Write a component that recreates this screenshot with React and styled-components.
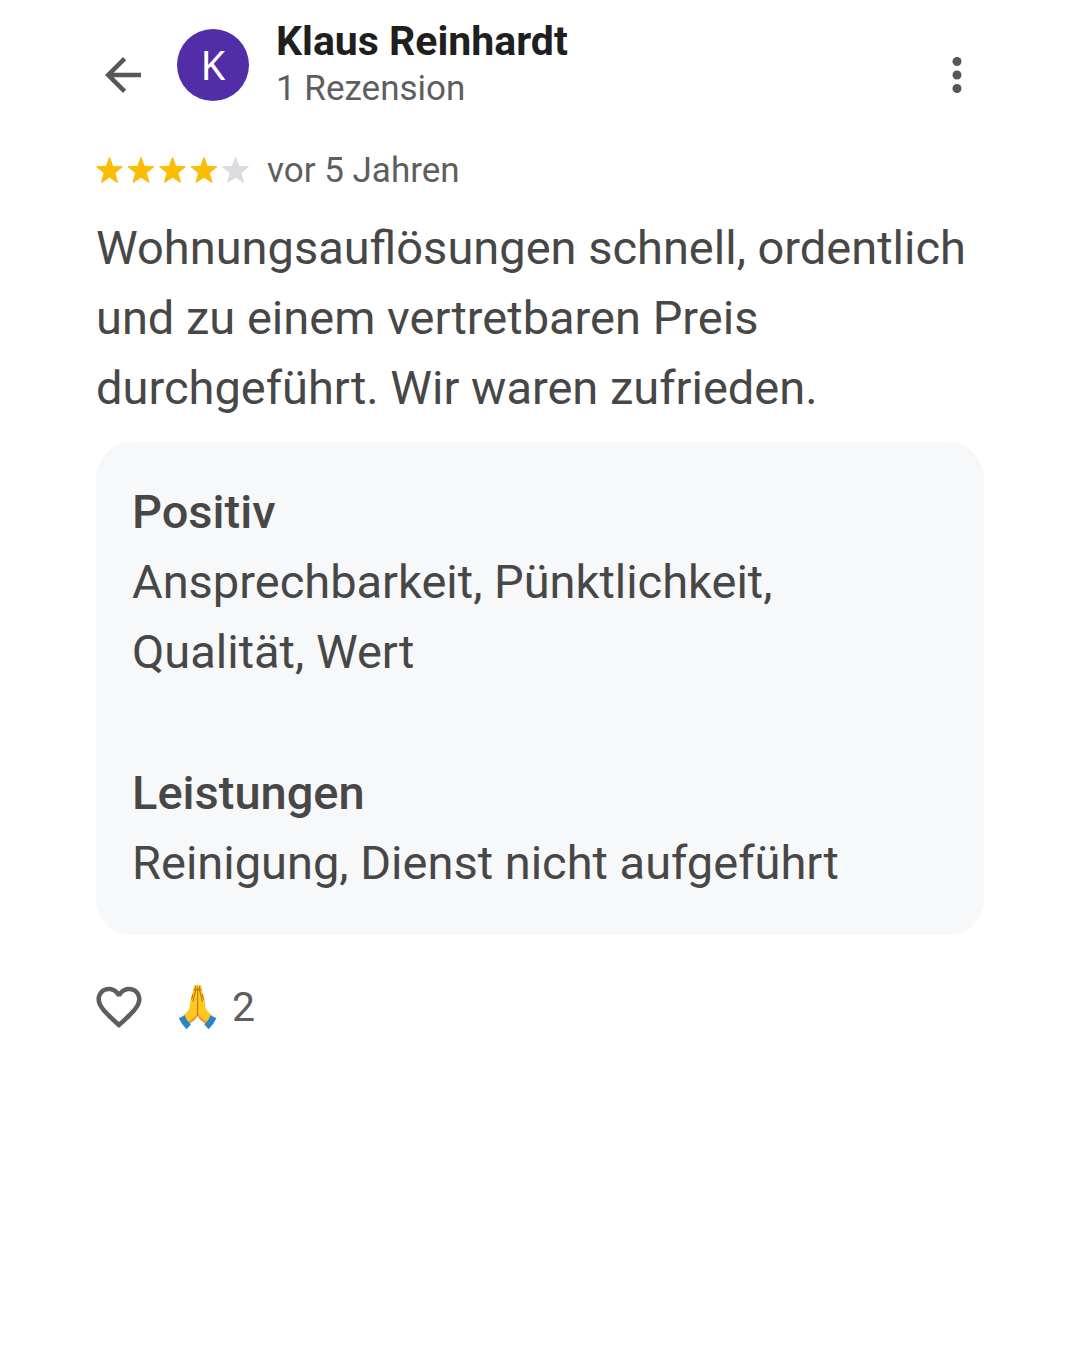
import React from "react";
import styled, { createGlobalStyle, ThemeProvider } from "styled-components";

const theme = {
  title: "#1f1f1f",
  text: "#474747",
  subtle: "#5e5e5e",
  icon: "#575757",
  card: "#f7f8fa",
  avatar: "#512da8",
  star: "#fbbc04",
  starEmpty: "#dadce0"
};

const review = {
  author: "Klaus Reinhardt",
  count: "1 Rezension",
  rating: 4,
  date: "vor 5 Jahren",
  text: "Wohnungsauflösungen schnell, ordentlich und zu einem vertretbaren Preis durchgeführt. Wir waren zufrieden.",
  details: [
    { title: "Positiv", value: "Ansprechbarkeit, Pünktlichkeit, Qualität, Wert" },
    { title: "Leistungen", value: "Reinigung, Dienst nicht aufgeführt" }
  ],
  reactions: 2
};

function Stars({ rating }) {
  return (
    <svg width="154" height="28" viewBox="0 0.6 154 28" role="img" aria-label={`${rating} von 5 Sternen`}>
      {[0, 1, 2, 3, 4].map((i) => (
        <path
          key={i}
          transform={`translate(${i * 31.5} 0)`}
          fill={i < rating ? theme.star : theme.starEmpty}
          stroke={i < rating ? theme.star : theme.starEmpty}
          strokeWidth="1"
          strokeLinejoin="round"
          d="M13.5 1 16.8 10 26.4 10.4 18.9 16.4 21.5 26.1 13.5 20.8 5.5 26.1 8.1 16.4 .6 10.4 10.2 10Z"
        />
      ))}
    </svg>
  );
}

function FoldedHands() {
  return (
    <svg width="40" height="46" viewBox="0 0 40 46" role="img" aria-label="Gefaltete Hände">
      <path fill="#ffc722" d="M15.8 2.2Q16.4 .7 18 1Q19.5 .4 21 1Q22.9 .6 23.3 2.2L24.2 7.5Q27.1 15.5 27.5 23.5Q29.2 28.2 34.3 31.4L28.3 40Q22.5 37.3 19.6 32.3Q16.7 37.3 10.9 40L4.9 31.4Q10 28.2 11.7 23.5Q12.1 15.5 15 7.5Z" />
      <path fill="#f19534" d="M19.6 31.5Q17.5 36.5 11.1 39.3L10 37.7Q15.5 35.6 19.1 29.8L19.6 24.5 20.1 29.8Q23.7 35.6 29.2 37.7L28.1 39.3Q21.7 36.5 19.6 31.5Z" />
      <path fill="none" stroke="#c1780f" strokeWidth="1.1" strokeLinecap="round" d="M19.6 3V31M17.5 2.5Q18.2 6 16.8 9.5L15 17.5M21.7 2.5Q21 6 22.4 9.5L24.2 17.5M15.8 6Q17.5 4.6 19.2 6M20 6Q21.7 4.6 23.4 6M14.8 10.5L13.7 15M24.4 10.5L25.5 15" />
      <path fill="#2686c9" d="M7 31.2Q8 36.2 13 40.2L8.6 45.2Q3.4 40.4 .8 34.2Z" />
      <path fill="#2686c9" d="M32.2 31.2Q31.2 36.2 26.2 40.2L30.6 45.2Q35.8 40.4 38.4 34.2Z" />
    </svg>
  );
}

function App() {
  return (
    <ThemeProvider theme={theme}>
      <GlobalStyle />
      <Page>
        <Header>
          <IconButton type="button" aria-label="Zurück">
            <svg width="54" height="54" viewBox="0 0 24 24" fill="currentColor">
              <path d="M20 11H7.83l5.59-5.59L12 4l-8 8 8 8 1.41-1.41L7.83 13H20v-2z" />
            </svg>
          </IconButton>
          <Avatar>K</Avatar>
          <Author>
            <Name>{review.author}</Name>
            <Meta>{review.count}</Meta>
          </Author>
          <IconButton type="button" aria-label="Mehr">
            <svg width="54" height="54" viewBox="0 0 24 24" fill="currentColor">
              <circle cx="12" cy="6" r="2" />
              <circle cx="12" cy="12" r="2" />
              <circle cx="12" cy="18" r="2" />
            </svg>
          </IconButton>
        </Header>

        <Rating>
          <Stars rating={review.rating} />
          <Meta>{review.date}</Meta>
        </Rating>

        <ReviewText>{review.text}</ReviewText>

        <Card>
          {review.details.map((detail) => (
            <div key={detail.title}>
              <DetailTitle>{detail.title}</DetailTitle>
              <DetailText>{detail.value}</DetailText>
            </div>
          ))}
        </Card>

        <Footer>
          <LikeButton type="button" aria-label="Gefällt mir">
            <svg width="46" height="46" viewBox="1.8 1.8 20.4 20.4" fill="currentColor">
              <path d="M16.5 3c-1.74 0-3.41.81-4.5 2.09C10.91 3.81 9.24 3 7.5 3 4.42 3 2 5.42 2 8.5c0 3.78 3.4 6.86 8.55 11.54L12 21.35l1.45-1.32C18.6 15.36 22 12.28 22 8.5 22 5.42 19.58 3 16.5 3zm-4.4 15.55l-.1.1-.1-.1C7.14 14.24 4 11.39 4 8.5 4 6.5 5.5 5 7.5 5c1.54 0 3.04.99 3.57 2.36h1.87C13.46 5.99 14.96 5 16.5 5c2 0 3.5 1.5 3.5 3.5 0 2.89-3.14 5.74-7.9 10.05z" />
            </svg>
          </LikeButton>
          <Reaction type="button">
            <FoldedHands />
            {review.reactions}
          </Reaction>
        </Footer>
      </Page>
    </ThemeProvider>
  );
}

export default App;

const GlobalStyle = createGlobalStyle`
  * {
    box-sizing: border-box;
  }

  body {
    margin: 0;
    background: #fff;
    font-family: Roboto, "Liberation Sans", sans-serif;
  }

  svg {
    display: block;
    flex-shrink: 0;
  }
`;

const Page = styled.main`
  padding: 18px 96px;
  color: ${(props) => props.theme.text};
`;

const Header = styled.header`
  display: flex;
  align-items: center;
`;

const IconButton = styled.button`
  margin: 20px 0 0;
  padding: 0;
  border: none;
  background: none;
  color: ${(props) => props.theme.icon};
  cursor: pointer;
`;

const LikeButton = styled(IconButton)`
  margin: 0;
  color: ${(props) => props.theme.subtle};
`;

const Avatar = styled.div`
  display: flex;
  align-items: center;
  justify-content: center;
  width: 72px;
  height: 72px;
  margin: 0 27px;
  border-radius: 50%;
  background: ${(props) => props.theme.avatar};
  color: #fff;
  font-family: "Noto Sans", Roboto, sans-serif;
  font-size: 40px;
  line-height: 48px;
`;

const Author = styled.div`
  display: grid;
  flex: 1;
  gap: 2px;
`;

const Name = styled.h1`
  margin: 0;
  color: ${(props) => props.theme.title};
  font-size: 41px;
  font-weight: 700;
  line-height: 46px;
`;

const Meta = styled.div`
  color: ${(props) => props.theme.subtle};
  font-size: 35px;
  line-height: 46px;
`;

const Rating = styled.div`
  display: flex;
  align-items: center;
  gap: 17px;
  margin: 36px 0 19px;
`;

const ReviewText = styled.p`
  margin: 0;
  font-size: 47px;
  line-height: 70px;
`;

const Card = styled.section`
  display: grid;
  gap: 71px;
  margin-top: 19px;
  padding: 35px 36px 37px;
  border-radius: 36px;
  background: ${(props) => props.theme.card};
`;

const DetailTitle = styled.h2`
  margin: 0;
  font-size: 47px;
  font-weight: 500;
  line-height: 70px;
`;

const DetailText = styled.p`
  margin: 0;
  font-size: 47px;
  line-height: 70px;
`;

const Footer = styled.footer`
  display: flex;
  align-items: center;
  gap: 36px;
  margin-top: 48px;
`;

const Reaction = styled.button`
  display: flex;
  align-items: center;
  gap: 14px;
  padding: 0;
  border: none;
  background: none;
  color: ${(props) => props.theme.subtle};
  font: inherit;
  font-size: 41px;
  line-height: 48px;
  cursor: pointer;
`;
